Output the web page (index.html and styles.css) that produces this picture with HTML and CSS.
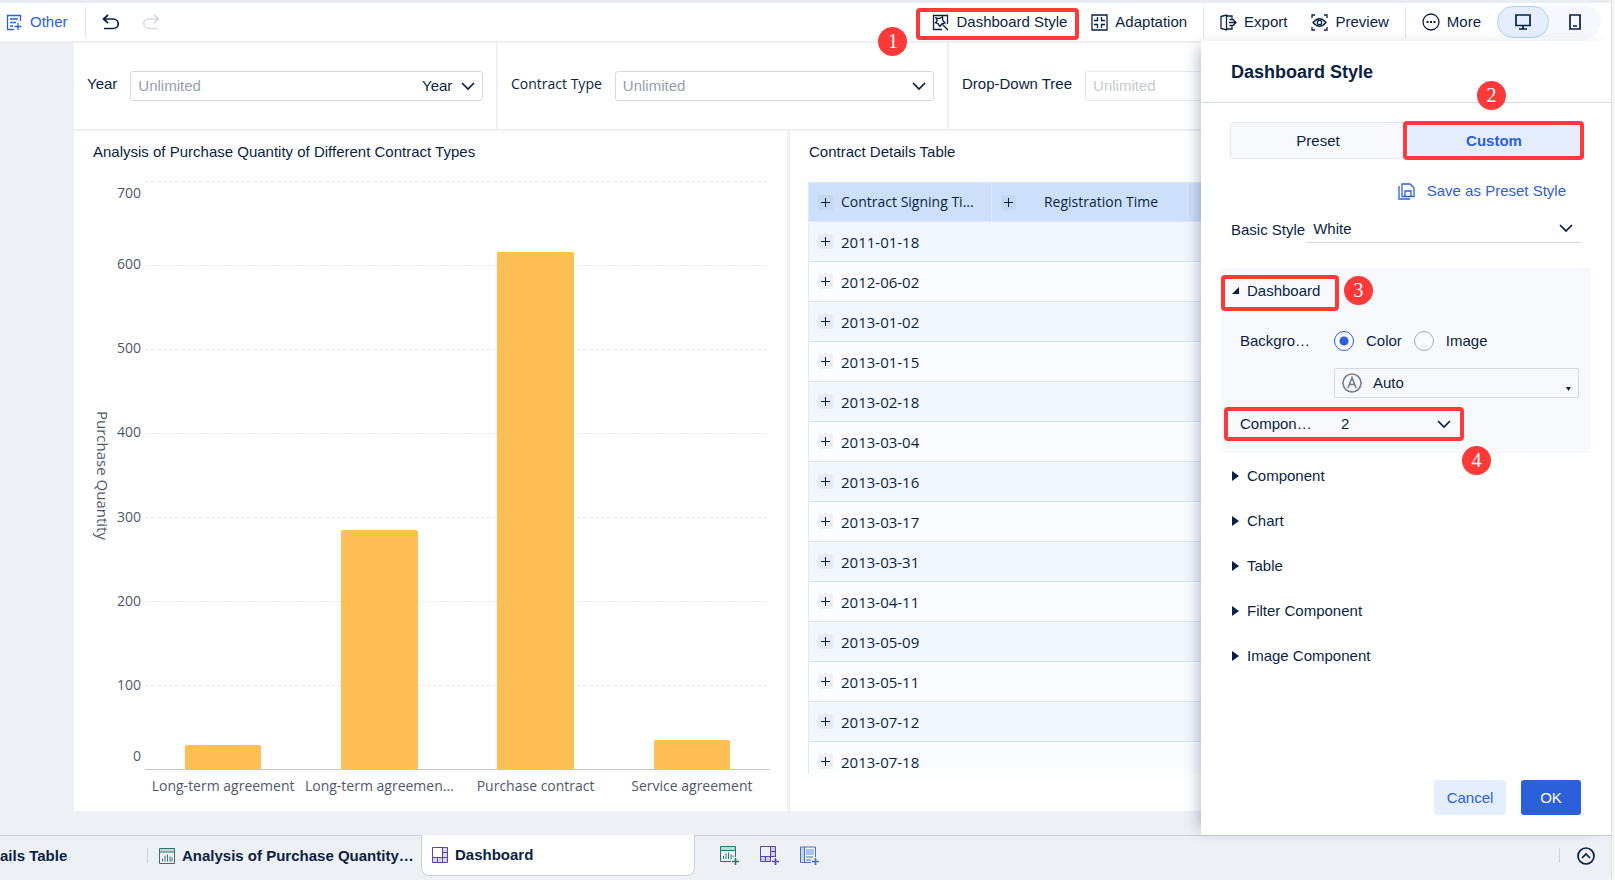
FILE: index.html
```html
<!DOCTYPE html>
<html lang="en">
<head>
<meta charset="utf-8">
<title>Dashboard</title>
<link rel="stylesheet" href="styles.css">
</head>
<body>
<div class="app">
  <header class="toolbar">
    <button class="tool tool-blue" type="button">
      <svg class="icon" width="17" height="17" viewBox="0 0 17 17"><path d="M14.500 7V1.500H1.500V15.500H8M4 5h8M4 8.500h6M4 12h3M8.500 12.500h7M12 9v7"/></svg>
      Other
    </button>
    <span class="rule rule-tall"></span>
    <button class="tool tool-undo" type="button" aria-label="Undo">
      <svg class="icon icon-bold" width="18" height="16" viewBox="0 0 18 16"><path d="M6 1 1.500 5 6 9M1.500 5h9.500c7 0 7 9.500 0 9.500H2"/></svg>
    </button>
    <button class="tool tool-redo" type="button" aria-label="Redo">
      <svg class="icon icon-bold" width="18" height="16" viewBox="0 0 18 16"><path d="M12 1l4.500 4L12 9M16.500 5H7c-7 0-7 9.500 0 9.500h9"/></svg>
    </button>
    <div class="tools-right">
      <button class="tool tool-style" type="button">
        <svg class="icon" width="17" height="17" viewBox="0 0 17 17"><path d="M10 15.500H1.500v-14h14V10M4 4l3.200.6L10.500 3l.3 3.500L13 9l-3.200.8L8 12.500 6.200 9.800 3.500 8.800l1.800-2zM10.500 10.500l5.500 5.500"/></svg>
        Dashboard Style
        <span class="mark mark-style"></span><span class="badge badge-one">1</span>
      </button>
      <button class="tool" type="button">
        <svg class="icon" width="17" height="17" viewBox="0 0 17 17"><path d="M1 1h15v15H1zM6.500 3v3.500H3M10.500 3v3.500H14M6.500 14v-3.500H3M10.500 14v-3.500H14"/></svg>
        Adaptation
      </button>
      <span class="rule rule-tall rule-group"></span>
      <button class="tool tool-export" type="button">
        <svg class="icon" width="17" height="17" viewBox="0 0 17 17"><path d="M1 2.500 6.500 1v15L1 14.500zM6.500 2H12v2.500M6.500 15H12v-2.500M9 8.500h7M9.500 5.500H13l3 3-3 3H9.500"/></svg>
        Export
      </button>
      <button class="tool" type="button">
        <svg class="icon" width="17" height="17" viewBox="0 0 17 17"><path d="M1 4V1h3M13 1h3v3M16 13v3h-3M4 16H1v-3M2 8.500Q8.500 1 15 8.500 8.500 16 2 8.500z"/><circle cx="8.500" cy="8.500" r="2.200"/></svg>
        Preview
      </button>
      <span class="rule rule-tall rule-group"></span>
      <button class="tool tool-more" type="button">
        <svg class="icon" width="18" height="18" viewBox="0 0 18 18"><circle cx="9" cy="9" r="8"/><path d="M4.500 9h2M8 9h2M11.500 9h2" stroke-width="1.800"/></svg>
        More
      </button>
      <div class="device-switch">
        <button class="device device-on" type="button" aria-label="Desktop">
          <svg class="icon icon-bold" width="16" height="16" viewBox="0 0 16 16"><path d="M1 1h14v10.500H1zM8 11.500V15M4 15h8"/></svg>
        </button>
        <button class="device" type="button" aria-label="Mobile">
          <svg class="icon icon-bold" width="12" height="16" viewBox="0 0 12 16"><path d="M1 1h10v14H1zM4 12h4"/></svg>
        </button>
      </div>
    </div>
  </header>

  <main class="workspace">
    <div class="canvas">
      <section class="filters">
        <div class="filter">
          <label class="filter-label" for="year">Year</label>
          <div class="field">
            <input class="field-input" id="year" type="text" placeholder="Unlimited">
            <select class="field-unit" aria-label="Date unit"><option>Year</option></select>
            <svg class="icon icon-bold chevron" width="14" height="9" viewBox="0 0 14 9"><path d="M1 1l6 6 6-6"/></svg>
          </div>
        </div>
        <div class="filter">
          <label class="filter-label filter-label-alt" for="ctype">Contract Type</label>
          <div class="field">
            <select class="field-input field-select" id="ctype"><option>Unlimited</option></select>
            <svg class="icon icon-bold chevron" width="14" height="9" viewBox="0 0 14 9"><path d="M1 1l6 6 6-6"/></svg>
          </div>
        </div>
        <div class="filter">
          <label class="filter-label" for="tree">Drop-Down Tree</label>
          <div class="field field-off">
            <input class="field-input" id="tree" type="text" placeholder="Unlimited" disabled>
          </div>
        </div>
      </section>

      <section class="widgets">
        <article class="widget">
          <h2 class="widget-title">Analysis of Purchase Quantity of Different Contract Types</h2>
          <div class="chart">
            <div class="chart-name">Purchase Quantity</div>
            <div class="ticks">
              <div class="tick"><span>700</span></div>
              <div class="tick"><span>600</span></div>
              <div class="tick"><span>500</span></div>
              <div class="tick"><span>400</span></div>
              <div class="tick"><span>300</span></div>
              <div class="tick"><span>200</span></div>
              <div class="tick"><span>100</span><span class="tick-zero">0</span></div>
            </div>
            <div class="plot">
              <div class="lines"><i></i><i></i><i></i><i></i><i></i><i></i><i></i></div>
              <div class="bars">
                <div class="bar" style="height:4.1%"></div>
                <div class="bar" style="height:40.6%"></div>
                <div class="bar" style="height:88%"></div>
                <div class="bar" style="height:4.9%"></div>
              </div>
            </div>
            <div class="names">
              <span>Long-term agreement</span><span>Long-term agreemen...</span><span>Purchase contract</span><span>Service agreement</span>
            </div>
          </div>
        </article>
        <article class="widget widget-table">
          <h2 class="widget-title">Contract Details Table</h2>
          <div class="table-clip">
            <table class="table">
              <colgroup><col class="col-sign"><col class="col-reg"><col></colgroup>
              <thead><tr>
                <th><div class="cell"><button class="plus" type="button" aria-label="Expand"></button>Contract Signing Ti...</div></th>
                <th><div class="cell"><button class="plus" type="button" aria-label="Expand"></button><span class="cell-mid">Registration Time</span></div></th>
                <th></th>
              </tr></thead>
              <tbody>
                <tr><td><div class="cell"><button class="plus" type="button" aria-label="Expand"></button>2011-01-18</div></td><td></td><td></td></tr>
                <tr><td><div class="cell"><button class="plus" type="button" aria-label="Expand"></button>2012-06-02</div></td><td></td><td></td></tr>
                <tr><td><div class="cell"><button class="plus" type="button" aria-label="Expand"></button>2013-01-02</div></td><td></td><td></td></tr>
                <tr><td><div class="cell"><button class="plus" type="button" aria-label="Expand"></button>2013-01-15</div></td><td></td><td></td></tr>
                <tr><td><div class="cell"><button class="plus" type="button" aria-label="Expand"></button>2013-02-18</div></td><td></td><td></td></tr>
                <tr><td><div class="cell"><button class="plus" type="button" aria-label="Expand"></button>2013-03-04</div></td><td></td><td></td></tr>
                <tr><td><div class="cell"><button class="plus" type="button" aria-label="Expand"></button>2013-03-16</div></td><td></td><td></td></tr>
                <tr><td><div class="cell"><button class="plus" type="button" aria-label="Expand"></button>2013-03-17</div></td><td></td><td></td></tr>
                <tr><td><div class="cell"><button class="plus" type="button" aria-label="Expand"></button>2013-03-31</div></td><td></td><td></td></tr>
                <tr><td><div class="cell"><button class="plus" type="button" aria-label="Expand"></button>2013-04-11</div></td><td></td><td></td></tr>
                <tr><td><div class="cell"><button class="plus" type="button" aria-label="Expand"></button>2013-05-09</div></td><td></td><td></td></tr>
                <tr><td><div class="cell"><button class="plus" type="button" aria-label="Expand"></button>2013-05-11</div></td><td></td><td></td></tr>
                <tr><td><div class="cell"><button class="plus" type="button" aria-label="Expand"></button>2013-07-12</div></td><td></td><td></td></tr>
                <tr><td><div class="cell"><button class="plus" type="button" aria-label="Expand"></button>2013-07-18</div></td><td></td><td></td></tr>
              </tbody>
            </table>
          </div>
        </article>
      </section>
    </div>

    <aside class="panel">
      <h1 class="panel-title">Dashboard Style</h1>
      <div class="panel-body">
        <div class="modes">
          <button class="mode" type="button">Preset</button>
          <button class="mode mode-on" type="button">Custom<span class="mark mark-mode"></span><span class="badge badge-two">2</span></button>
        </div>
        <button class="save" type="button">
          <svg class="icon" width="17" height="17" viewBox="0 0 17 17"><path d="M4 1h8l4 4v8.500H4zM1 3v13h11M7 13V8h6v5"/></svg>
          Save as Preset Style
        </button>
        <div class="basic">
          <label for="basic">Basic Style</label>
          <div class="basic-field">
            <select class="plain-select" id="basic"><option>White</option></select>
            <svg class="icon icon-bold chevron" width="14" height="9" viewBox="0 0 14 9"><path d="M1 1l6 6 6-6"/></svg>
          </div>
        </div>
      </div>
      <section class="group">
        <button class="section-head section-open" type="button">
          <svg width="7" height="7" viewBox="0 0 7 7"><path d="M7 0v7H0z"/></svg>Dashboard
          <span class="mark mark-section"></span><span class="badge badge-three">3</span>
        </button>
        <div class="setting">
          <span class="setting-name">Backgro…</span>
          <label class="choice"><input type="radio" name="bg" checked>Color</label>
          <label class="choice"><input type="radio" name="bg">Image</label>
        </div>
        <button class="auto" type="button">
          <svg class="icon" width="20" height="20" viewBox="0 0 20 20"><circle cx="10" cy="10" r="9"/><path d="M6 15 10 4.500 14 15M7.500 11.500h5"/></svg>
          Auto
          <svg class="caret" width="5" height="4" viewBox="0 0 5 4"><path d="M0 0h5L2.500 4z"/></svg>
        </button>
        <div class="gap-row">
          <label class="setting-name" for="gap">Compon…</label>
          <select class="plain-select" id="gap"><option>2</option></select>
          <svg class="icon icon-bold chevron" width="14" height="9" viewBox="0 0 14 9"><path d="M1 1l6 6 6-6"/></svg>
          <span class="mark mark-gap"></span><span class="badge badge-four">4</span>
        </div>
      </section>
      <nav class="sections">
        <button class="section-head" type="button"><svg width="7" height="10" viewBox="0 0 7 10"><path d="M0 0l7 5-7 5z"/></svg>Component</button>
        <button class="section-head" type="button"><svg width="7" height="10" viewBox="0 0 7 10"><path d="M0 0l7 5-7 5z"/></svg>Chart</button>
        <button class="section-head" type="button"><svg width="7" height="10" viewBox="0 0 7 10"><path d="M0 0l7 5-7 5z"/></svg>Table</button>
        <button class="section-head" type="button"><svg width="7" height="10" viewBox="0 0 7 10"><path d="M0 0l7 5-7 5z"/></svg>Filter Component</button>
        <button class="section-head" type="button"><svg width="7" height="10" viewBox="0 0 7 10"><path d="M0 0l7 5-7 5z"/></svg>Image Component</button>
      </nav>
      <footer class="panel-foot">
        <button class="btn btn-light" type="button">Cancel</button>
        <button class="btn btn-main" type="button">OK</button>
      </footer>
    </aside>
  </main>

  <footer class="tabs">
    <button class="tab tab-first" type="button">ails Table</button>
    <span class="rule"></span>
    <button class="tab tab-chart" type="button">
      <svg class="art art-green" width="16" height="16" viewBox="0 0 16 16"><path class="soft" d="M1 1h14v3H1z"/><path d="M.5.500h15v15H.5zM.5 4h15M3.500 13.500v-3M6 13.500v-6M8.500 13.500v-7M11 13.500v-5M13 13.500v-4"/></svg>
      Analysis of Purchase Quantity…
    </button>
    <button class="tab tab-on" type="button">
      <svg class="art art-violet" width="16" height="16" viewBox="0 0 16 16"><path class="soft" d="M10.500.500h5v15H.5v-5h10z"/><path d="M.5.500h15v15H.5zM10.500.500v15M.5 10.500h15M10.500 5.500h5M5.500 10.500v5"/></svg>
      Dashboard
    </button>
    <div class="adders">
      <button class="adder" type="button" aria-label="Add chart">
        <svg class="art art-green" width="19" height="19" viewBox="0 0 19 19"><path class="soft" d="M1 1h14v3H1z"/><path d="M11 15.500H.5V.500h15V11M.5 4.500h15M3.500 13v-3M6 13V7.500M8.500 13V6.500M11 13V8.500M13 11V9.500"/><path d="M15.500 12v7M12 15.500h7" stroke-width="1.600"/></svg>
      </button>
      <button class="adder" type="button" aria-label="Add dashboard">
        <svg class="art art-violet" width="19" height="19" viewBox="0 0 19 19"><path class="soft" d="M10.500.500h5v10h-5v5H.5v-5h10z"/><path d="M11 15.500H.5V.500h15V11M10.500.500v15M.5 10.500h15M10.500 5.500h5M5.500 10.500v5"/><path d="M15.500 12v7M12 15.500h7" stroke-width="1.600"/></svg>
      </button>
      <button class="adder" type="button" aria-label="Add report">
        <svg class="art art-blue" width="19" height="19" viewBox="0 0 19 19"><path class="soft" d="M1 1h3v14H1z"/><path class="mid" d="M6 3h8v6H6z"/><path d="M11 16.500H.5V1h15v10M4.500 1v15M6 11h7M6 14h5"/><path d="M15.500 12v7M12 15.500h7" stroke-width="1.600"/></svg>
      </button>
    </div>
    <span class="rule rule-end"></span>
    <button class="expand" type="button" aria-label="Expand">
      <svg class="icon icon-bold" width="18" height="18" viewBox="0 0 18 18"><circle cx="9" cy="9" r="8"/><path d="M5 11l4-4 4 4"/></svg>
    </button>
  </footer>
</div>
</body>
</html>
```

FILE: styles.css
```css
* { box-sizing: border-box; }

:root {
  --ink: #0a1f44;
  --blue: #2c60db;
  --red: #fc3a39;
  --line: #d5d9e2;
  --canvas: #eff0f5;
  --sans: "Liberation Sans", Arial, sans-serif;
  --humanist: "Open Sans", "Noto Sans", sans-serif;
}

body {
  margin: 0;
  background: #f5f5f5;
  color: var(--ink);
  font: 15px/20px var(--sans);
}

button, input, select {
  margin: 0;
  padding: 0;
  border: 0;
  background: none;
  color: inherit;
  font: inherit;
}

select { appearance: none; opacity: 1; }
h1, h2 { margin: 0; }
svg { flex: none; fill: var(--ink); }

.icon { fill: none; stroke: currentColor; stroke-width: 1.3; }
.icon-bold { stroke-width: 1.7; }
.chevron { pointer-events: none; }

.app {
  display: flex;
  flex-direction: column;
  min-height: 100vh;
  margin-right: 4px;
  overflow: hidden;
  box-shadow: 1px 0 0 #dfe1e5;
}

/* Callout frames and numbers */
.mark {
  position: absolute;
  border: 4px solid var(--red);
  border-radius: 4px;
  pointer-events: none;
}

.badge {
  position: absolute;
  z-index: 5;
  width: 29px;
  height: 29px;
  border-radius: 50%;
  background: var(--red);
  color: #fff;
  font: 20px/29px "Liberation Serif", serif;
  text-align: center;
}

.mark-style { inset: -4px -12px -8px -16px; }
.badge-one { left: -54px; top: 15px; }
.mark-mode { inset: -2px -3px -2px -4px; }
.badge-two { left: 70px; top: -42px; }
.mark-section { inset: 7px auto 2px 0; width: 118px; }
.badge-three { left: 123px; top: 8px; }
.mark-gap { inset: 0 127px 0 3px; }
.badge-four { left: 241px; top: 39px; }

/* Toolbar */
.toolbar {
  display: flex;
  align-items: center;
  height: 41px;
  padding: 0 10px 0 6px;
  border-top: 3px solid #e9edf3;
  background: #fff;
}

.tool {
  position: relative;
  display: flex;
  align-items: center;
  gap: 7px;
  white-space: nowrap;
}

.tool-blue { color: var(--blue); }
.tool-undo { margin-left: 16px; }
.tool-redo { margin-left: 22px; color: #d5d9e2; }

.rule { width: 1px; height: 15px; background: #ccd1db; }
.rule-tall { height: 31px; margin-left: 17px; background: #e2e5ec; }
.rule-group { margin: 0 -8px; }

.tools-right {
  display: flex;
  align-items: center;
  gap: 24px;
  margin-left: auto;
}

.device-switch {
  display: flex;
  margin-left: -8px;
  border-radius: 16px;
  background: #f7f8fd;
}

.device {
  display: grid;
  place-items: center;
  width: 52px;
  height: 32px;
  border: 1px solid transparent;
  border-radius: 16px;
}

.device-on { border-color: #b5cffb; background: #e5eefe; }

/* Dashboard canvas */
.workspace {
  position: relative;
  display: flex;
  flex: 1;
  background: var(--canvas);
}

.canvas {
  display: flex;
  flex: 1;
  flex-direction: column;
  gap: 2px;
  min-width: 0;
  padding: 2px 0 24px 74px;
}

.filters { display: grid; grid-template-columns: 422fr 449fr 662fr; gap: 2px; }

.filter {
  display: flex;
  align-items: center;
  gap: 13px;
  min-width: 0;
  height: 86px;
  padding: 0 13px;
  background: #fff;
}

.filter-label { padding-bottom: 4px; white-space: nowrap; }
.filter-label-alt { font: 14px/20px var(--humanist); }

.field {
  display: flex;
  flex: 1;
  align-items: center;
  gap: 8px;
  min-width: 0;
  height: 30px;
  padding: 0 7px;
  border: 1px solid var(--line);
  border-radius: 3px;
}

.field-input { flex: 1; min-width: 0; }
.field-input::placeholder, .field-select { color: #95a0b2; opacity: 1; }
.field-off { border-color: #e8eaf0; }
.field-off .field-input::placeholder { color: #c8ccd4; }

.widgets {
  display: grid;
  flex: 1;
  grid-template-columns: 713fr 821fr;
  gap: 3px;
}

.widget {
  display: flex;
  flex-direction: column;
  min-width: 0;
  padding: 11px 17px 13px 18px;
  background: #fff;
}

.widget-title {
  padding-left: 1px;
  font-size: 15px;
  font-weight: 400;
  line-height: 20px;
}

.chart {
  display: grid;
  flex: 1;
  grid-template: 1fr 28px / 21px 24px 1fr;
  column-gap: 4px;
  padding-top: 19px;
  color: #50596a;
  font: 14px/24px var(--humanist);
}

.chart-name {
  justify-self: end;
  align-self: center;
  font-size: 15px;
  line-height: 20px;
  writing-mode: vertical-rl;
}

.ticks, .lines { display: flex; flex-direction: column; }

.tick {
  display: flex;
  flex: 1;
  flex-direction: column;
  min-height: 60px;
  text-align: right;
}

.tick:not(:first-child) span:first-child { margin-top: -13px; }
.tick-zero { margin-top: auto; padding-bottom: 2px; }

.plot { display: grid; border-bottom: 1px solid #c5c7cc; }
.lines, .bars { grid-area: 1 / 1; }

.lines i {
  flex: 1;
  background: repeating-linear-gradient(90deg, #ebebeb 0 4px, transparent 4px 6px) top / 100% 1px no-repeat;
}

.bars, .names { display: grid; grid-template-columns: repeat(4, 1fr); }
.bars { align-items: end; justify-items: center; }
.bar { width: 49%; border-radius: 2px 2px 0 0; background: #ffbf55; }
.names { grid-column: 3; padding-top: 4px; text-align: center; white-space: nowrap; }

.widget-table { padding-right: 0; }

.table-clip {
  flex: 1;
  contain: size;
  margin: 20px 0 24px;
  overflow: hidden;
}

.table {
  width: 100%;
  border-collapse: collapse;
  border-left: 1px solid #dce9fc;
  table-layout: fixed;
  font: 15px/20px var(--humanist);
}

.col-sign { width: 183px; }
.col-reg { width: 196px; }
.table th, .table td { height: 40px; padding: 0; border: 1px solid #dce9fc; }
.table th { height: 39px; background: #cde0fb; font-size: 14px; font-weight: 400; }
.table td { border-width: 1px 0; background: #fbfcff; }
.table tr:nth-child(odd) td { background: #f2f6fe; }

.cell {
  display: flex;
  align-items: center;
  gap: 8px;
  padding: 0 9px;
  text-align: left;
  white-space: nowrap;
}

.cell-mid { flex: 1; text-align: center; }

.plus {
  flex: none;
  width: 15px;
  height: 15px;
  background:
    linear-gradient(var(--ink), var(--ink)) center / 9px 1px no-repeat,
    linear-gradient(var(--ink), var(--ink)) center / 1px 9px no-repeat,
    rgba(20, 40, 80, .05);
}

/* Style panel */
.panel {
  position: absolute;
  inset: 0 0 0 auto;
  z-index: 2;
  display: flex;
  flex-direction: column;
  width: 410px;
  background: #fff;
  box-shadow: -8px 0 14px -6px rgba(10, 31, 68, .3);
}

.panel-title {
  padding: 21px 30px 19px;
  border-bottom: 1px solid var(--line);
  font-size: 18px;
  line-height: 21px;
}

.panel-body { padding: 19px 30px 24px 29px; }
.modes { display: flex; margin-right: -1px; }

.mode {
  position: relative;
  flex: 1;
  height: 37px;
  border: 1px solid #e4e7ef;
  border-radius: 3px;
  background: #f8f9fd;
}

.mode-on { border-color: #e5eefe; background: #e5eefe; color: var(--blue); font-weight: 700; }

.save {
  display: flex;
  align-items: center;
  gap: 12px;
  margin: 22px 15px 0 auto;
  color: var(--blue);
}

.basic { display: flex; gap: 1px; padding: 14px 0 0 1px; }
.basic label { padding-top: 5px; white-space: nowrap; }

.basic-field {
  display: flex;
  flex: 1;
  align-items: center;
  height: 28px;
  padding: 0 8px 0 7px;
  border-bottom: 1px solid var(--line);
}

.plain-select { flex: 1; min-width: 0; }

.group {
  margin: 1px 20px 0;
  padding-bottom: 12px;
  background: #f8f9fd;
}

.section-head {
  position: relative;
  display: flex;
  align-items: center;
  gap: 8px;
  width: 100%;
  height: 45px;
  padding-left: 11px;
  text-align: left;
}

.setting {
  display: flex;
  align-items: center;
  gap: 12px;
  height: 55px;
  padding-left: 19px;
}

.setting-name { width: 82px; }
.choice { display: flex; align-items: center; gap: 12px; }

.choice input {
  width: 20px;
  height: 20px;
  border: 1px solid #a5adbb;
  border-radius: 50%;
  appearance: none;
}

.choice input:checked {
  border-color: var(--blue);
  background: radial-gradient(circle, var(--blue) 4px, transparent 5px);
}

.auto {
  display: flex;
  align-items: center;
  gap: 11px;
  width: 245px;
  height: 30px;
  margin: 0 12px 9px auto;
  padding: 0 7px;
  border: 1px solid var(--line);
  border-radius: 2px;
}

.auto .icon { color: #727e91; stroke-width: 1.6; }
.caret { margin: 12px 0 0 auto; }

.gap-row {
  position: relative;
  display: flex;
  align-items: center;
  height: 34px;
  padding: 0 140px 0 19px;
}

.gap-row .setting-name { width: 101px; }

.panel-foot {
  display: flex;
  gap: 15px;
  justify-content: flex-end;
  margin-top: auto;
  padding: 20px 30px;
}

.sections { margin: 0 20px; }
.btn { height: 35px; border-radius: 3px; }
.btn-light { width: 72px; background: #e5eefe; color: var(--blue); }
.btn-main { width: 60px; background: var(--blue); color: #fff; }

/* Bottom tabs */
.tabs {
  display: flex;
  align-items: center;
  height: 45px;
  padding-bottom: 5px;
  border-top: 1px solid #cbd0da;
  border-radius: 0 0 6px 0;
  background: #edf0f5;
}

.tab {
  display: flex;
  align-items: center;
  gap: 7px;
  height: 39px;
  font-weight: 700;
  white-space: nowrap;
}

.tab-first { width: 147px; }
.tab-chart { width: 273px; padding-left: 11px; }

.tab-on {
  width: 274px;
  height: 41px;
  margin-top: -1px;
  padding-left: 10px;
  border: 1px solid #cbd0da;
  border-top: 0;
  border-radius: 0 0 8px 8px;
  background: #fff;
}

.art { fill: none; stroke: currentColor; stroke-width: 1; }
.art .soft { fill: currentColor; fill-opacity: .22; stroke: none; }
.art .mid { fill: #a9c2ef; stroke: none; }
.art-green { color: #37716c; }
.art-violet { color: #5b45a8; }
.art-blue { color: #4a6fb5; }

.adders { display: flex; gap: 21px; margin-left: 25px; }
.adder, .expand { display: flex; }
.rule-end { margin-left: auto; }
.expand { margin: 0 16px 0 17px; }
```
